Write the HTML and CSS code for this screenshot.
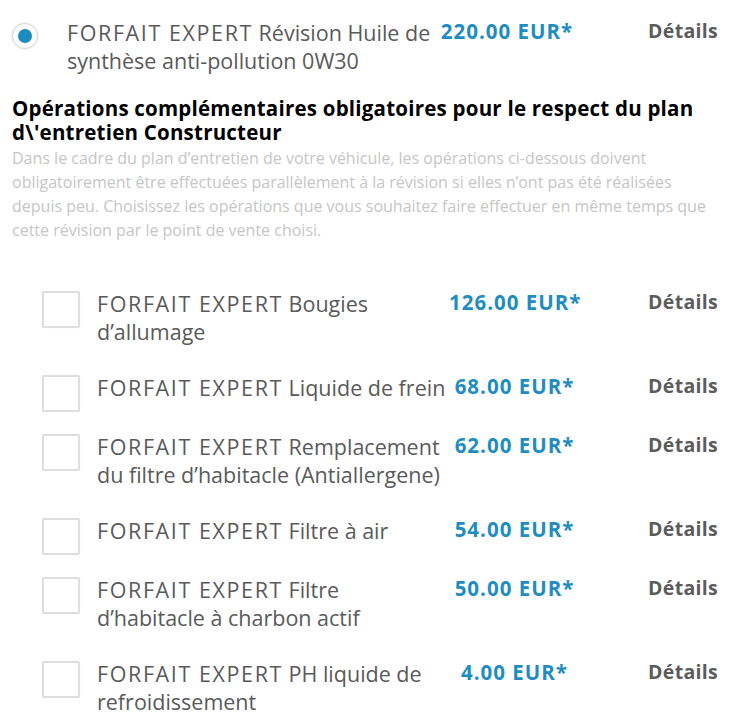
FILE: index.html
```html
<!DOCTYPE html>
<html lang="fr">
<head>
<meta charset="utf-8">
<link rel="stylesheet" href="styles.css">
</head>
<body>
<div class="page">
  <div class="main-row">
    <span class="radio"><span class="radio-dot"></span></span>
    <div class="main-label"><span class="fx">FORFAIT EXPERT</span> Révision Huile de synthèse anti-pollution 0W30</div>
    <div class="main-price">220.00 EUR*</div>
    <div class="details">Détails</div>
  </div>

  <h2 class="title">Opérations complémentaires obligatoires pour le respect du plan d\'entretien Constructeur</h2>
  <p class="intro">Dans le cadre du plan d’entretien de votre véhicule, les opérations ci-dessous doivent obligatoirement être effectuées parallèlement à la révision si elles n’ont pas été réalisées depuis peu. Choisissez les opérations que vous souhaitez faire effectuer en même temps que cette révision par le point de vente choisi.</p>

  <div class="items">
    <div class="item">
      <span class="check"></span>
      <div class="item-label"><span class="fx">FORFAIT EXPERT</span> Bougies d’allumage</div>
      <div class="item-price">126.00 EUR*</div>
      <div class="details">Détails</div>
    </div>
    <div class="item">
      <span class="check"></span>
      <div class="item-label"><span class="fx">FORFAIT EXPERT</span> Liquide de frein</div>
      <div class="item-price">68.00 EUR*</div>
      <div class="details">Détails</div>
    </div>
    <div class="item">
      <span class="check"></span>
      <div class="item-label"><span class="fx">FORFAIT EXPERT</span> Remplacement du filtre d’habitacle (Antiallergene)</div>
      <div class="item-price">62.00 EUR*</div>
      <div class="details">Détails</div>
    </div>
    <div class="item">
      <span class="check"></span>
      <div class="item-label"><span class="fx">FORFAIT EXPERT</span> Filtre à air</div>
      <div class="item-price">54.00 EUR*</div>
      <div class="details">Détails</div>
    </div>
    <div class="item">
      <span class="check"></span>
      <div class="item-label"><span class="fx">FORFAIT EXPERT</span> Filtre d’habitacle à charbon actif</div>
      <div class="item-price">50.00 EUR*</div>
      <div class="details">Détails</div>
    </div>
    <div class="item">
      <span class="check"></span>
      <div class="item-label"><span class="fx">FORFAIT EXPERT</span> PH liquide de refroidissement</div>
      <div class="item-price">4.00 EUR*</div>
      <div class="details">Détails</div>
    </div>
  </div>
</div>
</body>
</html>
```

FILE: styles.css
```css
html, body {
  margin: 0;
  padding: 0;
  background: #ffffff;
}
body {
  font-family: "Open Sans", Lato, "Liberation Sans", sans-serif;
  color: #5a5a5a;
  overflow: hidden;
}
.page {
  padding: 19px 11px 0 12px;
}
.main-row {
  display: flex;
  align-items: flex-start;
}
.radio {
  flex: none;
  width: 26px;
  height: 26px;
  margin-top: 4px;
  border-radius: 50%;
  border: 1px solid #d4d4d4;
  box-shadow: 0 0 2px rgba(0,0,0,0.15);
  box-sizing: border-box;
  display: flex;
  align-items: center;
  justify-content: center;
}
.radio-dot {
  width: 14px;
  height: 14px;
  border-radius: 50%;
  background: #1d8bbd;
}
.fx {
  letter-spacing: 1.6px;
}
.main-label {
  flex: none;
  width: 368px;
  margin-left: 29px;
  margin-right: -3px;
  font-size: 21.5px;
  line-height: 28px;
}
.main-price {
  flex: none;
  width: 150px;
  text-align: center;
  white-space: nowrap;
  font-size: 20.5px;
  letter-spacing: 1px;
  font-weight: 700;
  line-height: 24px;
  color: #1f8dc1;
}
.details {
  margin-left: auto;
  font-size: 19.5px;
  letter-spacing: 0.3px;
  font-weight: 700;
  line-height: 24px;
  color: #5c5c5c;
}
.title {
  margin: 21px 0 0 0;
  font-size: 20.5px;
  letter-spacing: 0.22px;
  line-height: 24px;
  font-weight: 700;
  color: #000000;
}
.intro {
  margin: 2px 0 0 0;
  font-size: 16px;
  line-height: 24px;
  color: #c6c6c6;
}
.items {
  margin-top: 48px;
  padding-left: 30px;
}
.item {
  display: flex;
  align-items: flex-start;
  min-height: 59px;
}
.check {
  flex: none;
  width: 38px;
  height: 37px;
  margin-top: 1px;
  border: 2px solid #dedede;
  border-radius: 2px;
  box-sizing: border-box;
  box-shadow: 0 0 1px rgba(0,0,0,0.1);
}
.item-label {
  flex: none;
  width: 352px;
  margin-left: 17px;
  padding-bottom: 28px;
  font-size: 21.5px;
  line-height: 28px;
}
.item-price {
  flex: none;
  width: 131px;
  text-align: center;
  white-space: nowrap;
  font-size: 20.5px;
  letter-spacing: 1px;
  font-weight: 700;
  line-height: 24px;
  color: #1f8dc1;
}
```
